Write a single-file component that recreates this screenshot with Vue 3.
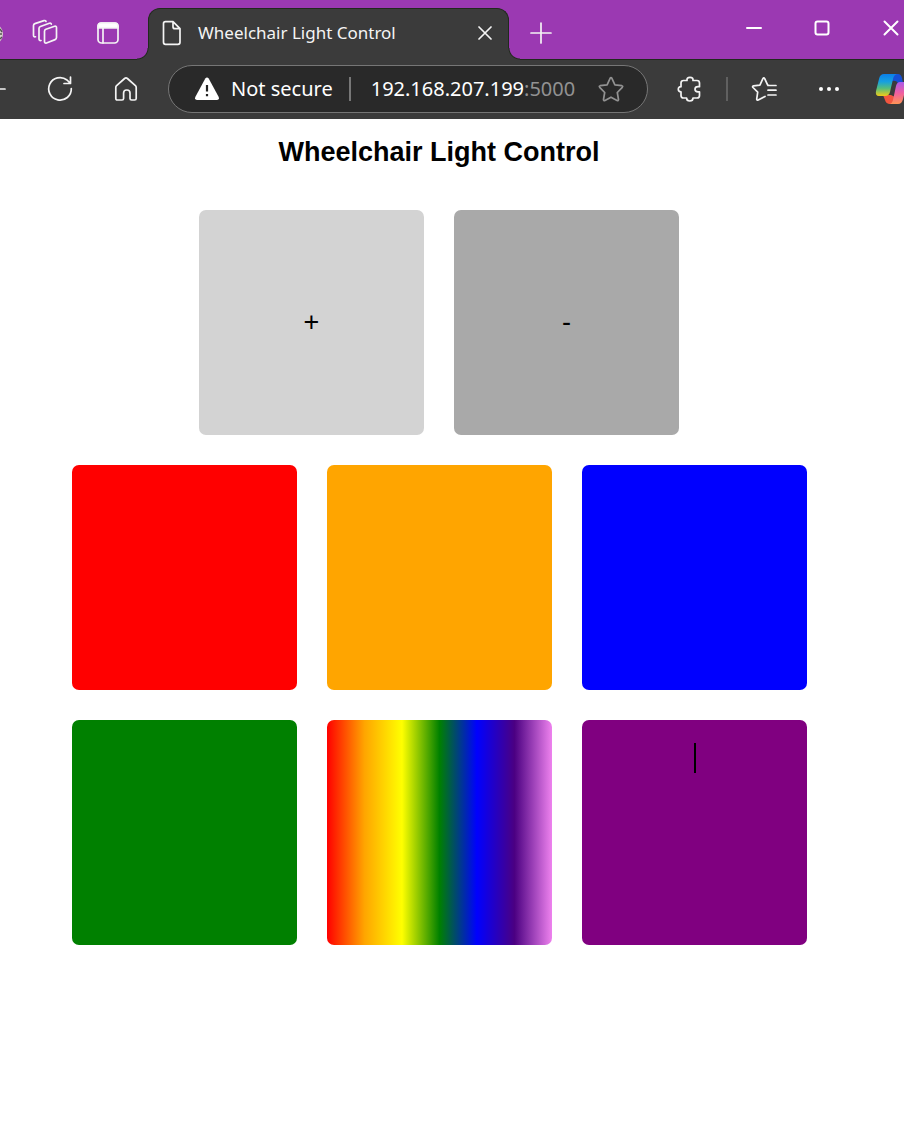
<script setup>
const rows = [
  [
    { name: 'brighter', label: '+' },
    { name: 'dimmer', label: '-' }
  ],
  [{ name: 'red' }, { name: 'orange' }, { name: 'blue' }],
  [{ name: 'green' }, { name: 'rainbow' }, { name: 'purple', caret: true }]
]
</script>

<template>
  <div class="window">
    <header>
      <div class="tab-strip">
        <button class="avatar" aria-label="Profile">
          <svg width="14" height="24" viewBox="0 0 14 24"><circle cx="-8" cy="12" r="11" fill="#d8d2cc" /><path d="M0 7l2 3M0 12h2M0 17l2-2" stroke="#555" stroke-width="1.5" /></svg>
        </button>
        <button class="strip-btn" aria-label="Workspaces">
          <svg width="28" height="28" viewBox="0 0 28 28" class="line">
            <path d="M13.500 12.200q0-1.500 1.400-2l8.700-2.900q1.900-.5 1.900 1.500v9.800q0 1.500-1.400 2L15.500 24q-2 .600-2-1.500z" />
            <path d="M10 21.500q-2 .300-2-1.400V9.500q0-1.500 1.400-2l9-3.200q1.500-.5 1.900.8" />
            <path d="M4.500 17.800q-2 .500-2-1.500V6.600q0-1.500 1.400-2l9.100-3q1.500-.4 2 .8" />
          </svg>
        </button>
        <button class="strip-btn" aria-label="Tab actions">
          <svg width="24" height="24" viewBox="0 0 24 24" class="line"><rect x="2" y="2" width="20" height="20" rx="3.500" /><path d="M2 7V5q0-3 3-3h14q3 0 3 3v2z" fill="#fff" /><path d="M7 7v15" /></svg>
        </button>
        <div class="tab">
          <svg width="22" height="26" viewBox="0 0 22 26" class="line"><path d="M4.500 1.700H12l7 7v13.600q0 2-2 2H4.500q-2 0-2-2V3.700q0-2 2-2zM12 1.700v5q0 2 2 2h5" /></svg>
          <span class="tab-title">Wheelchair Light Control</span>
          <button aria-label="Close tab">
            <svg width="14" height="14" viewBox="0 0 14 14" class="line"><path d="M1 1l12 12M13 1L1 13" /></svg>
          </button>
        </div>
        <button class="strip-btn" aria-label="New tab">
          <svg width="22" height="22" viewBox="0 0 22 22" class="line"><path d="M1 11h20M11 1v20" /></svg>
        </button>
        <div class="spacer"></div>
        <button class="win-btn" aria-label="Minimize">
          <svg width="16" height="16" viewBox="0 0 16 16" class="line bold"><path d="M1 8h14" /></svg>
        </button>
        <button class="win-btn" aria-label="Maximize">
          <svg width="16" height="16" viewBox="0 0 16 16" class="line bold"><rect x="1.500" y="1.500" width="13" height="13" rx="2" /></svg>
        </button>
        <button class="win-btn close" aria-label="Close">
          <svg width="16" height="16" viewBox="0 0 16 16" class="line bold"><path d="M1.500 1.500l13 13M14.500 1.500l-13 13" /></svg>
        </button>
      </div>

      <div class="toolbar">
        <button class="back" aria-label="Back">
          <svg width="7" height="24" viewBox="0 0 7 24" class="line"><path d="M0 12h5" /></svg>
        </button>
        <button class="tool" aria-label="Refresh">
          <svg width="28" height="28" viewBox="0 0 28 28" class="line"><path d="M25.300 13.500A11.300 11.300 0 1 1 21 5l3.500 3.400M24.500 2v6.500H18" /></svg>
        </button>
        <button class="tool" aria-label="Home">
          <svg width="26" height="26" viewBox="0 0 26 26" class="line"><path d="M2.800 11.400q0-1 .8-1.700l8-7.200q1.400-1.200 2.800 0l8 7.200q.8.700.8 1.700v11q0 1.600-1.600 1.600h-3q-1.600 0-1.600-1.600V17q0-3-3-3h-.4q-3 0-3 3v5.400Q10.600 24 9 24H4.400q-1.600 0-1.600-1.600z" /></svg>
        </button>
        <div class="address">
          <svg width="26" height="24" viewBox="0 0 26 24"><path d="M11.300 1.500q1.700-2.200 3.400 0l10 18.500q.9 3-1.700 3H3q-2.600 0-1.700-3z" fill="#fff" /><path d="M13 8v6.500M13 17v2.200" stroke="#222" stroke-width="2.200" /></svg>
          <span class="security">Not secure</span>
          <span class="bar"></span>
          <span class="url">192.168.207.199<span class="port">:5000</span></span>
          <button aria-label="Add to favorites">
            <svg width="26" height="26" viewBox="0 0 26 26" class="line dim"><path d="M12.100 2.300q.9-1.400 1.800 0l3 6.500 6.900.9q1.500.4.500 1.600l-5 5.200 1.200 7q0 1.600-1.500 1L13 21.200l-6 3.300q-1.500.6-1.500-1l1.200-7-5-5.200q-1-1.200.5-1.600l6.900-.9z" /></svg>
          </button>
        </div>
        <button class="tool" aria-label="Extensions">
          <svg width="26" height="26" viewBox="0 0 26 26" class="line"><path d="M6.500 4.500H10q-.4-3.200 3-3.200t3 3.200h4q2.500 0 2.500 2.500v3.700H21q-3 0-3 2.600t3 2.600h1.500v3.600q0 2.500-2.500 2.500h-4q0 3-3.200 3T9.600 22H6.500Q4 22 4 19.500v-3.600q-2.700 0-2.700-2.600T4 10.700V7q0-2.500 2.500-2.500z" /></svg>
        </button>
        <span class="divider"></span>
        <button class="tool" aria-label="Favorites">
          <svg width="26" height="26" viewBox="0 0 26 26" class="line"><path d="M18.500 9.500l-1.800-.4-3-6.500q-.9-1.500-1.800 0l-3 6.500-6.400.8q-1.500.4-.5 1.600l4.700 4.600-1 7q0 1.500 1.500.9l6.800-3.500M17 9.500h8M17 14.200h8M17 19h8" /></svg>
        </button>
        <button class="tool" aria-label="Settings and more">
          <svg width="22" height="6" viewBox="0 0 22 6" fill="#fff"><circle cx="3" cy="3" r="2" /><circle cx="11" cy="3" r="2" /><circle cx="19" cy="3" r="2" /></svg>
        </button>
        <button class="tool" aria-label="Copilot">
          <svg width="32" height="32" viewBox="0 0 32 32">
            <defs>
              <linearGradient id="cool" x1="0" y1="0" x2="0" y2="1"><stop offset="0" stop-color="#0b7fe8" /><stop offset=".35" stop-color="#16a0e0" /><stop offset=".65" stop-color="#55bd7c" /><stop offset="1" stop-color="#f1cc18" /></linearGradient>
              <linearGradient id="warm" x1="0" y1="0" x2="0" y2="1"><stop offset="0" stop-color="#a95bea" /><stop offset=".5" stop-color="#ef5fa0" /><stop offset="1" stop-color="#ff9455" /></linearGradient>
            </defs>
            <path d="M16 1h7q3 0 4 4l1 5h-5q-2-3-6-2z" fill="#1650d4" />
            <path d="M8 22h8l4 2 1 7h-6q-4 0-5-4z" fill="#f2553f" />
            <path d="M9 1h14q-4 0-5 5l-3 13q-1 4-5 4H4q-4 0-3-5L4 6q1-5 5-5z" fill="url(#cool)" />
            <path d="M25 9h3q4 0 3 5l-3 12q-1 5-5 5h-9q3 0 4-4l3-14q1-4 4-4z" fill="url(#warm)" />
          </svg>
        </button>
      </div>
    </header>

    <main>
      <h1>Wheelchair Light Control</h1>
      <div class="grid">
        <div v-for="(row, i) in rows" :key="i" class="row">
          <button v-for="tile in row" :key="tile.name" class="tile" :class="tile.name" :aria-label="tile.name">
            {{ tile.label }}<span v-if="tile.caret" class="caret"></span>
          </button>
        </div>
      </div>
    </main>
  </div>
</template>

<style>
body { background: #fff; }
</style>

<style scoped>
.window { overflow: hidden; min-height: 100vh; }
button { padding: 0; border: 0; background: none; color: inherit; display: flex; align-items: center; justify-content: center; flex: none; cursor: pointer; }
svg { display: block; flex: none; }
.line { fill: none; stroke: #f4f4f4; stroke-width: 1.7; stroke-linejoin: round; stroke-linecap: round; }
.bold { stroke: #fff; stroke-width: 2; }
.dim { stroke: #929292; }
header { font-family: "Noto Sans", "Open Sans", sans-serif; color: #fff; }
.tab-strip { display: flex; height: 60px; margin-right: -22px; background: #9b39b2; box-sizing: border-box; padding-top: 8px; border-bottom: 1px solid #202a1d; }
.avatar { width: 14px; }
.strip-btn { width: 64px; padding-bottom: 2px; }
.avatar + .strip-btn { width: 62px; }
.tab { position: relative; display: flex; align-items: center; width: 361px; box-sizing: border-box; margin: 0 0 -1px 8px; padding: 0 16px 3px 12px; background: #3b3b3b; border: 1px solid #202a1d; border-bottom: 0; border-radius: 12px 12px 0 0; }
.tab::before, .tab::after { content: ""; position: absolute; bottom: 0; width: 12px; height: 12px; }
.tab::before { left: -12px; background: radial-gradient(circle at 0 0, transparent 10px, #202a1d 11px, #3b3b3b 12px); }
.tab::after { right: -12px; background: radial-gradient(circle at 100% 0, transparent 10px, #202a1d 11px, #3b3b3b 12px); }
.tab-title { flex: 1; margin-left: 15px; font-size: 17px; line-height: 24px; white-space: nowrap; color: #f4f4f4; }
.spacer { flex: 1; }
.win-btn { width: 68px; height: 40px; }
.win-btn.close { width: 70px; }
.toolbar { display: flex; align-items: center; box-sizing: border-box; height: 59px; padding-bottom: 1px; margin-right: -17px; background: #3b3b3b; }
.back { width: 27px; justify-content: flex-start; }
.tool { width: 66px; height: 48px; }
.tool:nth-last-child(2) { width: 64px; }
.tool:last-child { width: 60px; }
.address { flex: 1; min-width: 0; display: flex; align-items: center; height: 48px; margin: 0 9px; padding: 0 23px 0 25px; box-sizing: border-box; border: 1px solid #767676; border-radius: 24px; background: #292929; font-size: 20px; line-height: 28px; white-space: nowrap; }
.security { margin-left: 11px; }
.bar { width: 2px; height: 24px; margin: 0 20px 0 16px; background: #777; }
.url { flex: 1; }
.port { color: #929292; }
.divider { width: 2px; height: 24px; margin: 0 3px; background: #606060; }
main { padding: 16px 26px 32px 0; font-family: "Liberation Sans", Arial, sans-serif; color: #000; }
h1 { margin: 0 0 41px; font-size: 27px; line-height: 34px; text-align: center; }
.grid { display: flex; flex-direction: column; gap: 30px; }
.row { display: flex; justify-content: center; gap: 30px; }
.tile { position: relative; width: 225px; height: 225px; border-radius: 7px; font-family: "Liberation Sans", Arial, sans-serif; font-size: 27px; color: #000; }
.brighter { background: lightgray; }
.dimmer { background: darkgray; }
.red { background: red; }
.orange { background: orange; }
.blue { background: blue; }
.green { background: green; }
.rainbow { background: linear-gradient(to right, red, orange, yellow, green, blue, indigo, violet); }
.purple { background: purple; }
.caret { position: absolute; top: 23px; left: 50%; width: 2px; height: 30px; background: #000; }
</style>
